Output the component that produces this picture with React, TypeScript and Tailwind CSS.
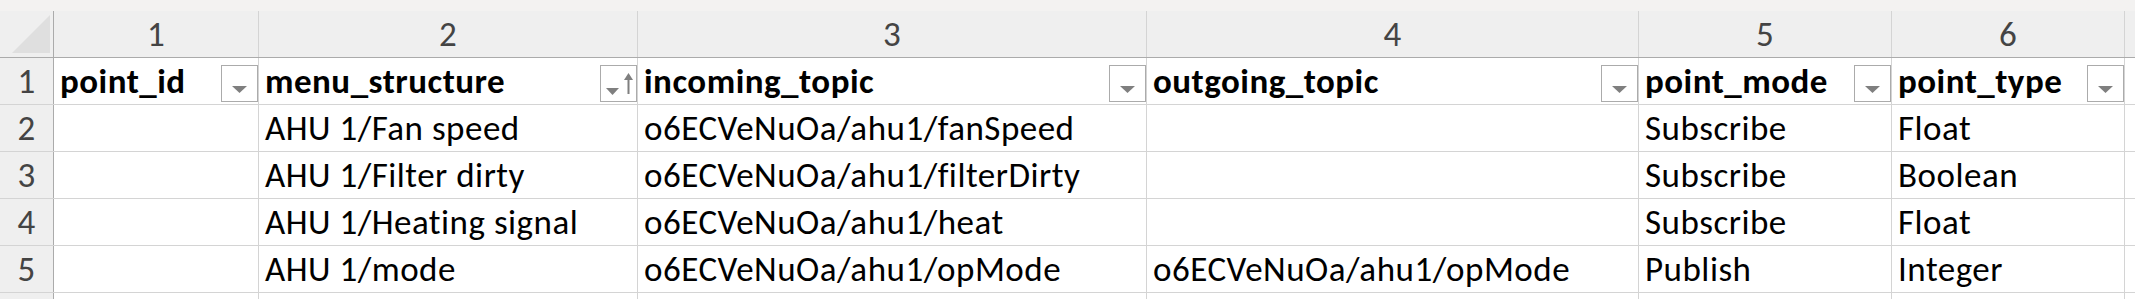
import React from "react";

type Col = { label: string; width: string; sort?: boolean };

const cols: Col[] = [
  { label: "point_id", width: "w-[205px]" },
  { label: "menu_structure", width: "w-[379px]", sort: true },
  { label: "incoming_topic", width: "w-[509px]" },
  { label: "outgoing_topic", width: "w-[492px]" },
  { label: "point_mode", width: "w-[253px]" },
  { label: "point_type", width: "w-[233px]" },
];

const rows: string[][] = [
  ["", "AHU 1/Fan speed", "o6ECVeNuOa/ahu1/fanSpeed", "", "Subscribe", "Float"],
  ["", "AHU 1/Filter dirty", "o6ECVeNuOa/ahu1/filterDirty", "", "Subscribe", "Boolean"],
  ["", "AHU 1/Heating signal", "o6ECVeNuOa/ahu1/heat", "", "Subscribe", "Float"],
  ["", "AHU 1/mode", "o6ECVeNuOa/ahu1/opMode", "o6ECVeNuOa/ahu1/opMode", "Publish", "Integer"],
];

function FilterButton({ sort }: { sort?: boolean }) {
  return (
    <div className="mt-[7px] flex h-[37px] w-[37px] shrink-0 items-center justify-center border border-[#ababab] bg-white">
      {sort ? (
        <svg width="35" height="35" viewBox="0 0 35 35">
          <polygon points="5,22 18,22 11.5,29" fill="#7f7f7f" />
          <rect x="26.5" y="12" width="2" height="16" fill="#7f7f7f" />
          <polygon points="23,14 32,14 27.5,7" fill="#7f7f7f" />
        </svg>
      ) : (
        <svg width="35" height="35" viewBox="0 0 35 35">
          <polygon points="10,20 25,20 17.5,27" fill="#7f7f7f" />
        </svg>
      )}
    </div>
  );
}

export default function App() {
  const font = { fontFamily: "Carlito, Lato, sans-serif" };
  return (
    <div className="h-[299px] w-[2135px] overflow-hidden bg-white text-[35px] leading-[46px] tracking-[0.5px] text-black" style={font}>
      <div className="h-[11px] bg-[#f3f2f1]" />

      {/* column letters */}
      <div className="flex h-[47px] border-b border-[#ababab] bg-[#efefef] text-[#444]">
        <div className="relative w-[54px] shrink-0 border-r border-[#ababab]">
          <svg className="absolute left-[12px] top-[4px]" width="38" height="38" viewBox="0 0 38 38">
            <polygon points="38,0 38,38 0,38" fill="#dfdfdf" />
          </svg>
        </div>
        {cols.map((c, i) => (
          <div key={c.label} className={`${c.width} shrink-0 border-r border-[#d4d4d4] text-center`}>
            {i + 1}
          </div>
        ))}
        <div className="flex-1" />
      </div>

      {/* header row */}
      <div className="flex h-[47px] border-b border-[#d4d4d4]">
        <div className="w-[54px] shrink-0 border-r border-[#ababab] bg-[#efefef] text-center text-[#444]">1</div>
        {cols.map((c) => (
          <div key={c.label} className={`${c.width} flex shrink-0 justify-between border-r border-[#d4d4d4] pl-[6px] font-bold`}>
            <span className="whitespace-nowrap">{c.label}</span>
            <FilterButton sort={c.sort} />
          </div>
        ))}
        <div className="flex-1" />
      </div>

      {rows.map((r, ri) => (
        <div key={ri} className="flex h-[47px] border-b border-[#d4d4d4]">
          <div className="w-[54px] shrink-0 border-r border-[#ababab] bg-[#efefef] text-center text-[#444]">{ri + 2}</div>
          {cols.map((c, ci) => (
            <div key={c.label} className={`${c.width} shrink-0 overflow-hidden whitespace-nowrap border-r border-[#d4d4d4] pl-[6px]`}>
              {r[ci]}
            </div>
          ))}
          <div className="flex-1" />
        </div>
      ))}

      <div className="flex h-[47px]">
        <div className="w-[54px] shrink-0 border-r border-[#ababab] bg-[#efefef]" />
        {cols.map((c) => (
          <div key={c.label} className={`${c.width} shrink-0 border-r border-[#d4d4d4]`} />
        ))}
      </div>
    </div>
  );
}
